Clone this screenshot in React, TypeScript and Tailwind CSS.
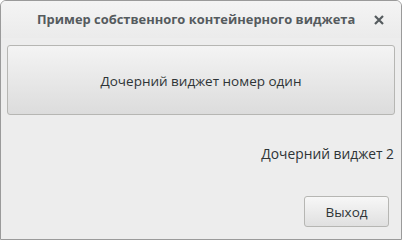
import React from "react";

export default function App() {
  return (
    <div
      className="w-[402px] h-[240px] bg-[#ededed] flex flex-col border border-[#9a9a9a] rounded-t-[6px] overflow-hidden"
      style={{ fontFamily: '"Open Sans", sans-serif' }}
    >
      <div className="h-[37px] shrink-0 flex items-center bg-gradient-to-b from-[#f4f4f4] to-[#ebebeb] relative">
        <div className="flex-1 pl-[36px] text-[12.9px] font-bold text-[#555b5e]">
          Пример собственного контейнерного виджета
        </div>
        <div className="w-[38px] flex items-center justify-center pr-[6px]">
          <svg width="10" height="10" viewBox="0 0 10 10">
            <path d="M1 1L9 9M9 1L1 9" stroke="#555b5e" strokeWidth="2.2" strokeLinecap="butt" />
          </svg>
        </div>
      </div>
      <div className="flex-1 flex flex-col px-[6px] pt-[7px] pb-[12px]">
        <button className="h-[70px] w-full rounded-[3px] border border-[#b6b6b3] bg-gradient-to-b from-[#f4f4f4] to-[#dcdcdc] text-[13.5px] text-[#2e3436] pt-[3px]">
          Дочерний виджет номер один
        </button>
        <div className="flex justify-end pr-[1px] mt-[30px] text-[13.8px] text-[#2e3436] leading-[18px]">
          Дочерний виджет 2
        </div>
        <div className="flex-1" />
        <div className="flex justify-end pr-[6px]">
          <button className="w-[85px] h-[31px] rounded-[3px] border border-[#b6b6b3] bg-gradient-to-b from-[#f7f7f7] to-[#e0e0e0] text-[13.5px] text-[#2e3436] pt-[1px]">
            Выход
          </button>
        </div>
      </div>
    </div>
  );
}
